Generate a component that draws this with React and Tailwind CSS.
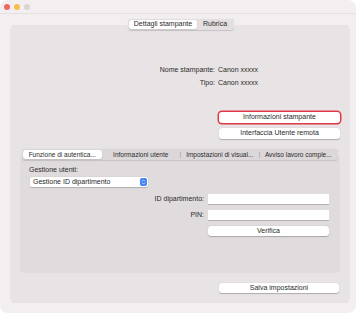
import { ChevronUp, ChevronDown } from "lucide-react";

const font = { fontFamily: '"Liberation Sans", Arial, sans-serif' };

function Btn({ children, focus }) {
  return (
    <div
      className={`w-[121px] h-[11px] flex items-center justify-center bg-white rounded-[3px] text-[7px] text-[#2a2a2a] shadow-[0_0.5px_1px_rgba(0,0,0,0.25)] ${
        focus ? "ring-[1.5px] ring-[#e03a46]" : ""
      }`}
    >
      {children}
    </div>
  );
}

function Field() {
  return <div className="w-[121px] h-[10px] bg-white shadow-[0_0.5px_0.5px_rgba(0,0,0,0.2)]" />;
}

export default function App() {
  const innerTabs = [
    "Funzione di autentica...",
    "Informazioni utente",
    "Impostazioni di visual...",
    "Avviso lavoro comple...",
  ];

  return (
    <div className="w-[360px] h-[314px] bg-white" style={font}>
      <div className="w-[356px] h-[313px] rounded-[8px] bg-[#f3eef0] flex flex-col overflow-hidden">
        {/* title bar */}
        <div className="h-[14px] shrink-0 flex items-center gap-[4px] pl-[4px] border-b border-[#e6e0e2]">
          <div className="w-[6px] h-[6px] rounded-full bg-[#ec6a5e]" />
          <div className="w-[6px] h-[6px] rounded-full bg-[#f4bf4f]" />
          <div className="w-[6px] h-[6px] rounded-full bg-[#d9d5d7]" />
        </div>

        <div className="flex flex-col pl-[10px] pt-[5px]">
          {/* top segmented tabs */}
          <div className="relative z-10 self-start ml-[118px] h-[11px] flex items-center bg-[#e4e0e2] rounded-[3px] p-[1px] text-[7px] text-[#2a2a2a] shadow-[0_0.5px_1px_rgba(0,0,0,0.15)]">
            <div className="h-full w-[68px] flex items-center justify-center bg-white rounded-[2.5px] shadow-[0_0.5px_1px_rgba(0,0,0,0.2)]">
              Dettagli stampante
            </div>
            <div className="h-full w-[36px] flex items-center justify-center">Rubrica</div>
          </div>

          {/* group box */}
          <div className="-mt-[5px] w-[340px] h-[278px] bg-[#e8e4e5] rounded-[4px] flex flex-col pt-[40px] text-[7px] text-[#2a2a2a]">
            <div className="flex h-[10px] items-center">
              <div className="w-[205px] text-right">Nome stampante:</div>
              <div className="ml-[3px]">Canon xxxxx</div>
            </div>
            <div className="flex h-[10px] items-center mt-[3px]">
              <div className="w-[205px] text-right">Tipo:</div>
              <div className="ml-[3px]">Canon xxxxx</div>
            </div>

            <div className="flex flex-col items-end pr-[10px] mt-[24px] gap-[5px]">
              <Btn focus>Informazioni stampante</Btn>
              <Btn>Interfaccia Utente remota</Btn>
            </div>

            {/* inner tabs */}
            <div className="relative z-10 mt-[10px] mx-[12px] h-[11px] flex items-center bg-[#dcd8da] rounded-[3px] p-[1px] text-[6.5px] shadow-[0_0.5px_1px_rgba(0,0,0,0.12)]">
              {innerTabs.map((t, i) => (
                <div key={t} className="flex-1 h-full flex items-center">
                  {i > 1 && <div className="w-px h-[6px] bg-[#b9b5b7]" />}
                  <div
                    className={`flex-1 h-full flex items-center justify-center whitespace-nowrap ${
                      i === 0 ? "bg-white rounded-[2.5px] shadow-[0_0.5px_1px_rgba(0,0,0,0.2)]" : ""
                    }`}
                  >
                    {t}
                  </div>
                </div>
              ))}
            </div>

            <div className="-mt-[5px] mx-[10px] h-[118px] bg-[#e0dcdd] rounded-[4px] flex flex-col pt-[10px]">
              <div className="h-[10px] flex items-center pl-[9px]">Gestione utenti:</div>
              <div className="mt-[2px] ml-[10px] w-[118px] h-[10px] bg-white rounded-[2px] flex items-center justify-between pl-[3px] pr-[1px] shadow-[0_0.5px_1px_rgba(0,0,0,0.2)]">
                <span>Gestione ID dipartimento</span>
                <span className="w-[7px] h-[8px] rounded-[2px] bg-[#3f84f2] flex flex-col items-center justify-center text-white">
                  <ChevronUp size={5} strokeWidth={3} className="-mb-[1px]" />
                  <ChevronDown size={5} strokeWidth={3} className="-mt-[1px]" />
                </span>
              </div>

              <div className="mt-[7px] flex items-center justify-end pr-[11px] gap-[4px]">
                <span>ID dipartimento:</span>
                <Field />
              </div>
              <div className="mt-[5px] flex items-center justify-end pr-[11px] gap-[4px]">
                <span>PIN:</span>
                <Field />
              </div>
              <div className="mt-[6px] flex justify-end pr-[11px]">
                <div className="w-[121px] h-[10px] flex items-center justify-center bg-white rounded-[3px] shadow-[0_0.5px_1px_rgba(0,0,0,0.25)]">
                  Verifica
                </div>
              </div>
            </div>

            <div className="mt-[10px] flex justify-end pr-[11px]">
              <div className="w-[120px] h-[10px] flex items-center justify-center bg-white rounded-[3px] shadow-[0_0.5px_1px_rgba(0,0,0,0.25)]">
                Salva impostazioni
              </div>
            </div>
          </div>
        </div>
      </div>
    </div>
  );
}
